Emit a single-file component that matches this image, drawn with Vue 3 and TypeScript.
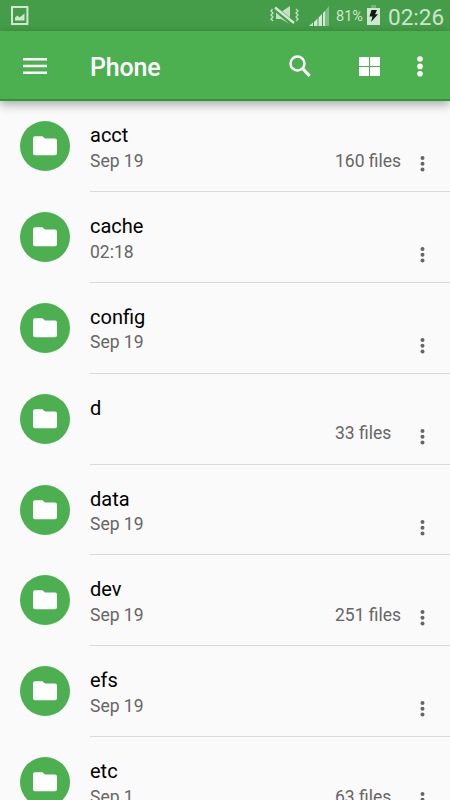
<script setup lang="ts">
interface Entry {
  name: string
  modified: string
  files: string
}

const entries: Entry[] = [
  { name: 'acct', modified: 'Sep 19', files: '160 files' },
  { name: 'cache', modified: '02:18', files: '' },
  { name: 'config', modified: 'Sep 19', files: '' },
  { name: 'd', modified: '', files: '33 files' },
  { name: 'data', modified: 'Sep 19', files: '' },
  { name: 'dev', modified: 'Sep 19', files: '251 files' },
  { name: 'efs', modified: 'Sep 19', files: '' },
  { name: 'etc', modified: 'Sep 1', files: '63 files' },
]
</script>

<template>
  <div class="screen">
    <div class="status">
      <svg class="picture" width="18" height="20" viewBox="0 0 18 20">
        <rect x="1" y="1" width="15.4" height="17" fill="none" stroke="#cfe8d0" stroke-width="2" />
        <path d="M4 14.5V11.5L6.5 9.5L8.5 11.5L13.5 7.5V14.5Z" fill="#cfe8d0" />
      </svg>
      <svg class="mute" width="30" height="20" viewBox="0 0 30 20" fill="none">
        <path d="M6 6H11L20 0V18L11 13H6Z" fill="#c3e0c4" />
        <path d="M4 1.5L24 18.5" stroke="#459d49" stroke-width="5" />
        <path d="M5 1.5L24 17" stroke="#d2e9d3" stroke-width="2.4" />
        <path d="M2.5 3L1 5L3 7L1 9L3 11L1 13L3 15M26 3L28 5L26 7L28 9L26 11L28 13L26 15" stroke="#c3e0c4" stroke-width="1.3" />
      </svg>
      <svg class="signal" width="21" height="21" viewBox="0 0 21 21">
        <path d="M0 20L4 16.5V20ZM5 16L8.5 12.5V20H5ZM9.5 11.5L13 8V20H9.5ZM14 7L16 5V20H14Z" fill="#d5ead6" />
        <path d="M16 5L20 0V20H16Z" fill="#82bd85" />
      </svg>
      <span class="percent">81%</span>
      <svg class="battery" width="13" height="20" viewBox="0 0 13 20">
        <path d="M4 0H9V3H4Z" fill="#75b678" />
        <path d="M0 3H13V20H0Z" fill="#cfe7d0" />
        <path d="M4.5 5H10L8 9.3H11L4 17L5.5 11.4H2.5Z" fill="#101c10" />
      </svg>
      <span class="clock">02:26</span>
    </div>

    <header class="toolbar">
      <svg class="menu" width="24" height="18" viewBox="0 0 24 18">
        <path d="M0 1.3H24M0 8H24M0 14.7H24" stroke="#fff" stroke-width="2.6" />
      </svg>
      <h1 class="title">Phone</h1>
      <svg class="search" width="23" height="23" viewBox="0 0 23 23" fill="none" stroke="#fff">
        <circle cx="8.5" cy="8.5" r="7" stroke-width="2.5" />
        <path d="M13.4 13.4L20.7 20.9" stroke-width="3" />
      </svg>
      <svg class="grid" width="22" height="20" viewBox="0 0 22 20">
        <path d="M0 0H10V9H0ZM11 0H21V9H11ZM0 10H10V19H0ZM11 10H21V19H11Z" fill="#fff" />
      </svg>
      <svg class="more" width="6" height="21" viewBox="0 0 6 21" fill="#fff">
        <circle cx="3" cy="3" r="2.8" />
        <circle cx="3" cy="10.4" r="2.8" />
        <circle cx="3" cy="17.8" r="2.8" />
      </svg>
    </header>

    <main class="list">
      <div v-for="entry in entries" :key="entry.name" class="row">
        <div class="avatar">
          <svg width="24" height="20" viewBox="0 0 24 20">
            <path d="M2 0.3H9.5L12 2.5H22Q24 2.5 24 4.5V17.3Q24 19.3 22 19.3H2Q0 19.3 0 17.3V2.3Q0 0.3 2 0.3Z" fill="#fff" />
          </svg>
        </div>
        <div class="body">
          <div class="text">
            <div class="name">{{ entry.name }}</div>
            <div class="date">{{ entry.modified }}</div>
          </div>
          <div class="count">{{ entry.files }}</div>
          <svg class="dots" width="5" height="16" viewBox="0 0 5 16" fill="#666">
            <circle cx="2.5" cy="2" r="2" />
            <circle cx="2.5" cy="7.7" r="2" />
            <circle cx="2.5" cy="13.4" r="2" />
          </svg>
        </div>
      </div>
    </main>
  </div>
</template>

<style>
body {
  overflow: hidden;
}
</style>

<style scoped>
.screen {
  display: flex;
  flex-direction: column;
  width: 450px;
  height: 800px;
  overflow: hidden;
  background: #fafafa;
  font-family: Roboto, sans-serif;
}
.screen svg {
  display: block;
  flex: none;
}
.status {
  display: flex;
  flex: none;
  align-items: flex-start;
  height: 31px;
  background: #459d49;
  color: #cde6ce;
}
.picture {
  margin: 6px 0 0 11px;
}
.mute {
  margin: 6px 0 0 241px;
}
.signal {
  margin: 6px 0 0 9px;
}
.percent {
  width: 30px;
  margin: 8px 0 0 6px;
  font-size: 14.5px;
  line-height: 18px;
}
.battery {
  margin: 5px 0 0 1px;
}
.clock {
  margin: 3px 0 0 8px;
  font-size: 22.5px;
  line-height: 28px;
}
.toolbar {
  position: relative;
  display: flex;
  flex: none;
  box-sizing: border-box;
  align-items: flex-start;
  height: 70px;
  border-bottom: 2px solid #35933a;
  background: #4caf50;
  box-shadow: 0 3px 10px rgba(0, 0, 0, 0.36);
}
.menu {
  margin: 27px 0 0 23px;
}
.title {
  width: 199px;
  margin: 22px 0 0 43px;
  color: #fff;
  font-size: 25px;
  font-weight: 500;
  letter-spacing: -0.2px;
  line-height: 30px;
}
.search {
  margin: 24px 0 0;
}
.grid {
  margin: 26px 0 0 47px;
}
.more {
  margin: 25px 0 0 36px;
}
.list {
  flex: 1;
  overflow: hidden;
  box-sizing: border-box;
  min-height: 0;
  padding-top: 0.2px;
}
.row {
  display: flex;
  height: 90.83px;
}
.avatar {
  display: flex;
  flex: none;
  align-items: center;
  justify-content: center;
  width: 50px;
  height: 50px;
  margin: 20px 20px 0;
  border-radius: 50%;
  background: #4caf50;
}
.body {
  display: flex;
  flex: 1;
  box-sizing: border-box;
  border-bottom: 1px solid #dadada;
}
.text {
  width: 245px;
}
.name {
  height: 24px;
  margin-top: 22px;
  color: #000;
  font-size: 20px;
  line-height: 24px;
}
.date,
.count {
  color: #666;
  font-size: 17.5px;
  line-height: 22px;
}
.date {
  margin-top: 2.6px;
}
.count {
  width: 85px;
  margin-top: 48.6px;
}
.dots {
  margin-top: 55px;
}
</style>
